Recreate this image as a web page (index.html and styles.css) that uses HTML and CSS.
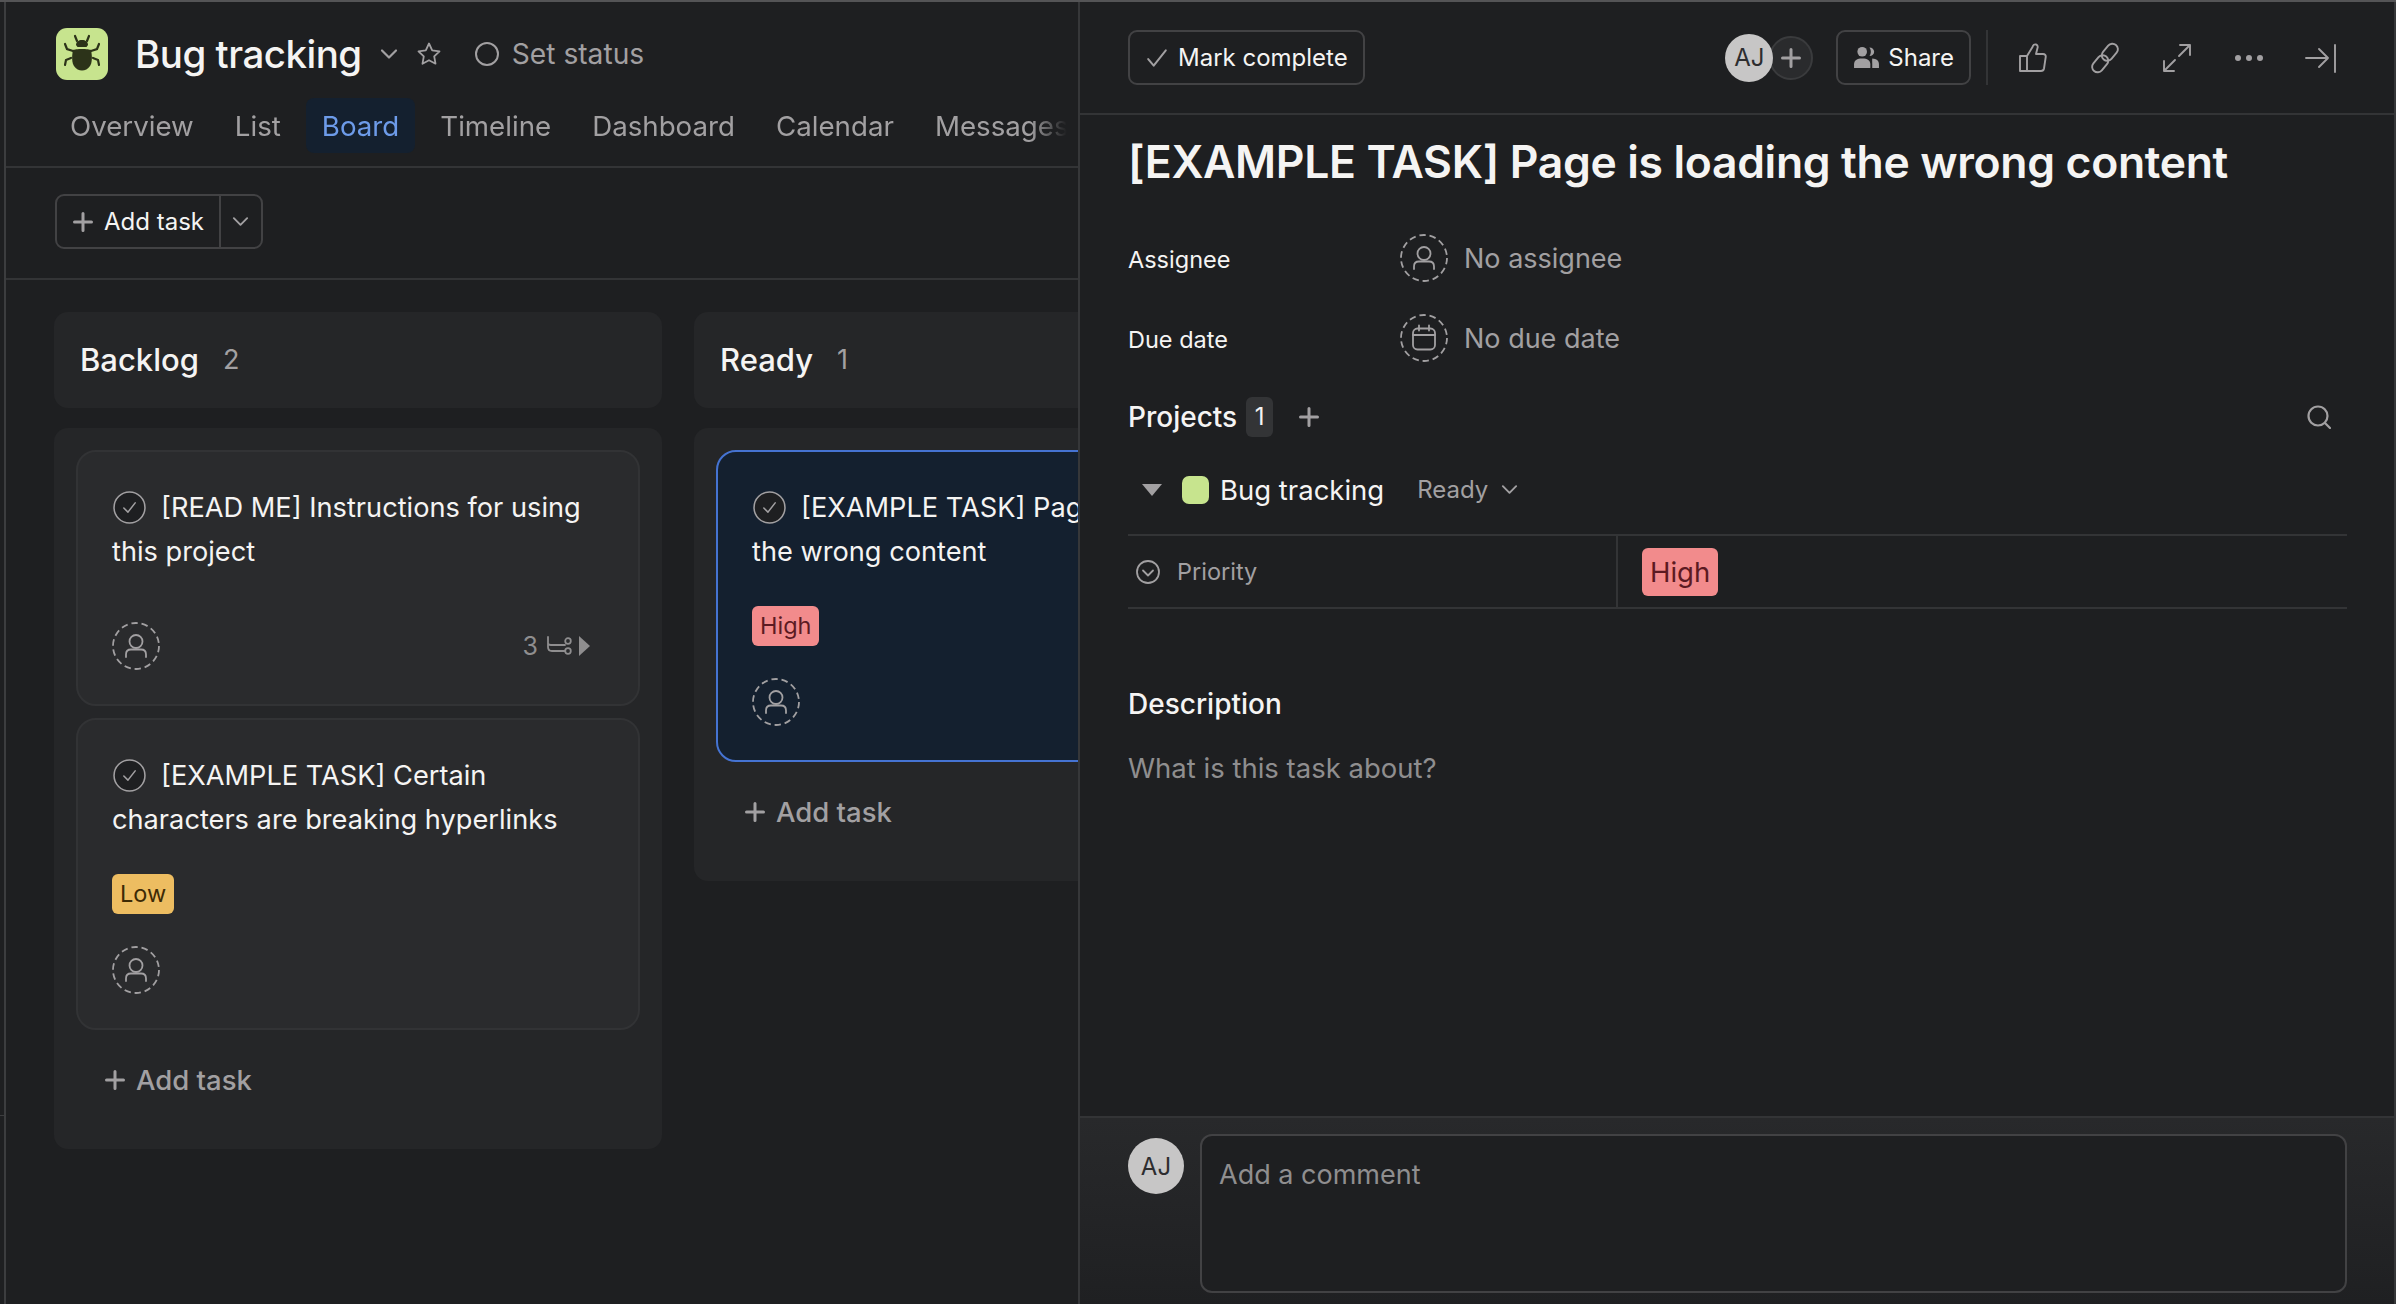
FILE: index.html
```html
<!DOCTYPE html>
<html>
<head>
    <meta name="viewport" content="width=device-width, initial-scale=1">
    <link rel="stylesheet" href="styles.css">
</head>
<body>

<svg class="icon-defs" width="0" height="0">
    <defs>
        <symbol id="person" viewBox="0 0 48 48">
            <circle class="dash-ring" cx="24" cy="24" r="23"/>
            <circle cx="24" cy="19.500" r="6.500"/>
            <path d="M14 35v-2.500c0-3 2-5 5-5h10c3 0 5 2 5 5V35"/>
        </symbol>
        <symbol id="calendar" viewBox="0 0 48 48">
            <circle class="dash-ring" cx="24" cy="24" r="23"/>
            <rect x="13" y="14.500" width="22" height="21" rx="4.500"/>
            <path d="M13 21h22M19 11.500v5M29 11.500v5"/>
        </symbol>
        <symbol id="check-circle" viewBox="0 0 32 32">
            <circle cx="16" cy="16" r="15" fill="#1e1f21"/>
            <path d="M10.500 16.500l4 4 7-9"/>
        </symbol>
        <symbol id="plus" viewBox="0 0 20 20">
            <path d="M10 1.500v17M1.500 10h17"/>
        </symbol>
        <symbol id="chevron" viewBox="0 0 20 20">
            <path d="M3 6.500l7 7 7-7"/>
        </symbol>
    </defs>
</svg>

<div class="app">
    <div class="rail"><div class="rail-item"></div></div>

    <div class="project">
        <div class="project-head">
            <div class="title-row">
                <div class="logo">
                    <svg viewBox="0 0 52 52" width="52" height="52">
                        <g fill="#2c3319">
                            <path d="M20 17c0-3 2.500-5 6-5s6 2 6 5l-1.500 2h-9z"/>
                            <path d="M17 22c2-1.500 16-1.500 18 0 1.500 7 1 13-1 16-2 3-5 4.500-8 4.500s-6-1.500-8-4.500c-2-3-2.500-9-1-16z"/>
                        </g>
                        <g fill="none" stroke="#2c3319" stroke-width="2.200" stroke-linecap="round">
                            <path d="M21 13l-2-5M31 13l2-5M17 23l-6-2-2-5M35 23l6-2 2-5M15 30l-5 2-1 5M37 30l5 2 1 5"/>
                        </g>
                    </svg>
                </div>
                <h1 class="project-name">Bug tracking</h1>
                <svg class="stroke-icon title-chevron"><use href="#chevron"/></svg>
                <svg class="stroke-icon star" viewBox="0 0 26 26"><path d="M13 2.500l3.200 6.800 7.300 1-5.300 5.100 1.300 7.300-6.500-3.500-6.500 3.500 1.300-7.300-5.300-5.100 7.300-1z"/></svg>
                <span class="status-dot"></span>
                <span class="set-status">Set status</span>
            </div>
            <div class="tabs">
                <span class="tab">Overview</span>
                <span class="tab">List</span>
                <span class="tab active">Board</span>
                <span class="tab">Timeline</span>
                <span class="tab">Dashboard</span>
                <span class="tab">Calendar</span>
                <span class="tab">Messages</span>
            </div>
        </div>

        <div class="toolbar">
            <div class="split-btn">
                <div class="split-main">
                    <svg class="stroke-icon plus-icon"><use href="#plus"/></svg>
                    <span>Add task</span>
                </div>
                <div class="split-arrow">
                    <svg class="stroke-icon arrow-icon"><use href="#chevron"/></svg>
                </div>
            </div>
        </div>

        <div class="board">
            <div class="column">
                <div class="column-head">
                    <span class="column-name">Backlog</span>
                    <span class="column-count">2</span>
                </div>
                <div class="column-body">
                    <div class="card">
                        <p class="card-title no-tag"><svg class="stroke-icon card-check"><use href="#check-circle"/></svg>[READ ME] Instructions for using this project</p>
                        <div class="card-foot">
                            <svg class="stroke-icon assignee-ring"><use href="#person"/></svg>
                            <span class="subtasks">
                                3
                                <svg class="stroke-icon subtask-icon" viewBox="0 0 26 22"><path d="M2 2v10c0 3 2 4 4 4h13M2 8c0 1.500 1 2 3 2h14"/><circle cx="22" cy="6" r="2.800"/><circle cx="22" cy="16" r="2.800"/></svg>
                                <svg class="subtask-arrow" viewBox="0 0 11 20"><path d="M0 0l11 10L0 20z"/></svg>
                            </span>
                        </div>
                    </div>
                    <div class="card">
                        <p class="card-title"><svg class="stroke-icon card-check"><use href="#check-circle"/></svg>[EXAMPLE TASK] Certain characters are breaking hyperlinks</p>
                        <span class="tag tag-low">Low</span>
                        <div class="card-foot">
                            <svg class="stroke-icon assignee-ring"><use href="#person"/></svg>
                        </div>
                    </div>
                    <div class="add-row">
                        <svg class="stroke-icon plus-icon"><use href="#plus"/></svg>
                        <span>Add task</span>
                    </div>
                </div>
            </div>

            <div class="column">
                <div class="column-head">
                    <span class="column-name">Ready</span>
                    <span class="column-count">1</span>
                </div>
                <div class="column-body">
                    <div class="card selected">
                        <p class="card-title"><svg class="stroke-icon card-check"><use href="#check-circle"/></svg>[EXAMPLE TASK] Page is loading the wrong content</p>
                        <span class="tag tag-high">High</span>
                        <div class="card-foot">
                            <svg class="stroke-icon assignee-ring"><use href="#person"/></svg>
                        </div>
                    </div>
                    <div class="add-row">
                        <svg class="stroke-icon plus-icon"><use href="#plus"/></svg>
                        <span>Add task</span>
                    </div>
                </div>
            </div>
        </div>
    </div>

    <div class="panel">
        <div class="panel-head">
            <div class="btn mark-btn">
                <svg class="stroke-icon mark-check" viewBox="0 0 20 20"><path d="M2 11l5 6L18 3"/></svg>
                <span>Mark complete</span>
            </div>
            <div class="panel-actions">
                <div class="collab">
                    <span class="avatar">AJ</span>
                    <span class="collab-add"><svg class="stroke-icon"><use href="#plus"/></svg></span>
                </div>
                <div class="btn share-btn">
                    <svg class="share-icon" viewBox="0 0 26 24"><circle cx="8.500" cy="6" r="5"/><path d="M0 23v-4c0-4 3-6 8.500-6s8.500 2 8.500 6v4z"/><path d="M16 1.500c3 0 5 2 5 4.500s-2 4.500-5 4.500c1-1.200 1.500-2.800 1.500-4.500S17 2.700 16 1.500zM19 13c4.500.2 7 2.200 7 6v4h-7v-4c0-2.500-.2-4.500 0-6z"/></svg>
                    <span>Share</span>
                </div>
                <span class="head-divider"></span>
                <div class="icon-row">
                    <svg class="stroke-icon head-icon" viewBox="0 0 32 32"><path d="M3 14h7v15H3zM10 14l5.500-9c.5-2 2-3 3.500-2.500 1.500.5 2 2 1.500 3.500L19 12h7c2 0 3 1.500 2.700 3.200L27 26.500c-.3 1.500-1.300 2.500-3 2.500H10"/></svg>
                    <svg class="stroke-icon head-icon" viewBox="0 0 32 32"><g transform="rotate(40 16 16)"><rect x="10.500" y="-1" width="11" height="19" rx="5.500"/><rect x="10.500" y="14" width="11" height="19" rx="5.500"/></g></svg>
                    <svg class="stroke-icon head-icon" viewBox="0 0 32 32"><path d="M19 3h10v10M29 3L18 14M13 29H3V19M3 29l11-11"/></svg>
                    <svg class="head-icon dots" viewBox="0 0 32 32"><circle cx="5" cy="16" r="3"/><circle cx="16" cy="16" r="3"/><circle cx="27" cy="16" r="3"/></svg>
                    <svg class="stroke-icon head-icon" viewBox="0 0 32 32"><path d="M1 16h22M14 7l9 9-9 9M30 3v27"/></svg>
                </div>
            </div>
        </div>

        <div class="panel-body">
            <h2 class="task-title">[EXAMPLE TASK] Page is loading the wrong content</h2>

            <div class="field-row">
                <span class="field-label">Assignee</span>
                <svg class="stroke-icon assignee-ring"><use href="#person"/></svg>
                <span class="field-value">No assignee</span>
            </div>
            <div class="field-row">
                <span class="field-label">Due date</span>
                <svg class="stroke-icon assignee-ring"><use href="#calendar"/></svg>
                <span class="field-value">No due date</span>
            </div>

            <div class="projects-head">
                <span class="projects-label">Projects</span>
                <span class="projects-count">1</span>
                <svg class="stroke-icon projects-plus"><use href="#plus"/></svg>
                <svg class="stroke-icon projects-search" viewBox="0 0 24 24"><circle cx="11" cy="11" r="9.500"/><path d="M18 18l5 5"/></svg>
            </div>

            <div class="project-row">
                <svg class="disclosure" viewBox="0 0 20 12"><path d="M0 0h20L10 12z"/></svg>
                <span class="project-swatch"></span>
                <span class="project-row-name">Bug tracking</span>
                <span class="project-section">Ready</span>
                <svg class="stroke-icon section-chevron"><use href="#chevron"/></svg>
            </div>

            <div class="custom-field">
                <div class="custom-label">
                    <svg class="stroke-icon priority-icon" viewBox="0 0 24 24"><circle cx="12" cy="12" r="11"/><path d="M7 10.500l5 5 5-5"/></svg>
                    <span>Priority</span>
                </div>
                <div class="custom-value">
                    <span class="tag tag-high tag-large">High</span>
                </div>
            </div>

            <h3 class="desc-title">Description</h3>
            <p class="desc-text">What is this task about?</p>
        </div>

        <div class="comment-bar">
            <span class="avatar avatar-large">AJ</span>
            <div class="comment-box">Add a comment</div>
        </div>
    </div>
</div>

</body>
</html>
```

FILE: styles.css
```css
* {
    box-sizing: border-box;
}

body {
    margin: 0;
    height: 100vh;
    overflow: hidden;
    background: #1e1f21;
    color: #f5f4f3;
    font-family: Inter, "Liberation Sans", sans-serif;
}

h1, h2, h3, p {
    margin: 0;
}

.icon-defs {
    display: block;
    position: absolute;
}

.stroke-icon {
    fill: none;
    stroke: currentColor;
    stroke-width: 1.8;
    stroke-linecap: round;
    stroke-linejoin: round;
}

.dash-ring {
    stroke-dasharray: 6.500 3.800;
    stroke-linecap: butt;
}

.app {
    display: flex;
    height: 100vh;
    border-top: 2px solid #545456;
}

/* sidebar sliver on the far left */
.rail {
    width: 6px;
    flex-shrink: 0;
    border-right: 2px solid #3c3d3f;
}

.rail-item {
    height: 1114px;
    border-bottom: 1px solid #3c3d3f;
}

/* project side */
.project {
    width: 1072px;
    flex-shrink: 0;
    overflow: hidden;
}

.project-head {
    height: 166px;
    padding-top: 26px;
    border-bottom: 2px solid #333436;
}

.title-row {
    display: flex;
    align-items: center;
    height: 52px;
    padding-left: 50px;
}

.logo {
    width: 52px;
    height: 52px;
    border-radius: 11px;
    background: #c7e48e;
}

.project-name {
    margin-left: 27px;
    font-size: 38.500px;
    font-weight: 500;
    letter-spacing: -0.5px;
}

.title-chevron {
    width: 20px;
    height: 20px;
    margin-left: 17px;
    color: #a2a0a2;
    stroke-width: 2.2;
}

.star {
    width: 26px;
    height: 26px;
    margin-left: 17px;
    color: #a2a0a2;
}

.status-dot {
    width: 24px;
    height: 24px;
    margin-left: 33px;
    border: 2px solid #a2a0a2;
    border-radius: 50%;
}

.set-status {
    margin-left: 13px;
    font-size: 28.200px;
    color: #a2a0a2;
}

.tabs {
    display: flex;
    gap: 9px;
    height: 55px;
    margin-top: 18px;
    padding-left: 48px;
    white-space: nowrap;
    -webkit-mask-image: linear-gradient(to right, #000 1024px, transparent 1061px);
    mask-image: linear-gradient(to right, #000 1024px, transparent 1061px);
}

.tab {
    display: flex;
    align-items: center;
    padding: 0 16px;
    border-radius: 8px;
    font-size: 27.700px;
    color: #a2a0a2;
}

.tab.active {
    background: #14202f;
    color: #6d9be9;
}

.toolbar {
    height: 112px;
    padding: 26px 0 0 49px;
    border-bottom: 2px solid #333436;
}

.split-btn {
    display: inline-flex;
    height: 55px;
    border: 2px solid #424244;
    border-radius: 9px;
    font-size: 24px;
}

.split-main {
    display: flex;
    align-items: center;
    gap: 11px;
    padding: 0 15px 0 16px;
    border-right: 2px solid #424244;
}

.split-arrow {
    display: flex;
    align-items: center;
    padding: 0 11px 0 10px;
}

.plus-icon {
    width: 20px;
    height: 20px;
    color: #a2a0a2;
    stroke-width: 3;
}

.arrow-icon {
    width: 19px;
    height: 19px;
    color: #a2a0a2;
    stroke-width: 2;
}

.board {
    display: flex;
    gap: 32px;
    padding: 32px 0 0 48px;
}

.column {
    width: 608px;
    flex-shrink: 0;
}

.column-head {
    display: flex;
    align-items: center;
    height: 96px;
    padding: 0 0 2px 26px;
    border-radius: 14px;
    background: #252628;
}

.column-name {
    font-size: 31px;
    font-weight: 500;
}

.column-count {
    margin-left: 24px;
    font-size: 27px;
    color: #a2a0a2;
}

.column-body {
    display: flex;
    flex-direction: column;
    gap: 12px;
    margin-top: 20px;
    padding: 22px 22px 31px;
    border-radius: 14px;
    background: #252628;
}

.card {
    display: flex;
    flex-direction: column;
    align-items: flex-start;
    padding: 34px;
    border: 2px solid #323335;
    border-radius: 20px;
    background: #2a2b2d;
}

.card.selected {
    border-color: #4573d2;
    background: #14202f;
}

.card-title {
    font-size: 27.200px;
    line-height: 44px;
    margin-bottom: 32px;
}

.card-title.no-tag {
    margin-bottom: 48px;
}

.card-check {
    width: 33px;
    height: 33px;
    margin: 0 15px 0 1px;
    vertical-align: -7px;
    color: #a2a0a2;
    stroke-width: 1.5;
}

.tag {
    height: 40px;
    margin-bottom: 32px;
    padding: 0 8px;
    border-radius: 6px;
    font-size: 23.500px;
    line-height: 40px;
}

.tag-low {
    background: #edbd61;
    color: #3d2a05;
}

.tag-high {
    background: #f28b8c;
    color: #5c1a22;
}

.card-foot {
    display: flex;
    align-items: center;
    justify-content: space-between;
    width: 100%;
}

.assignee-ring {
    width: 48px;
    height: 48px;
    flex-shrink: 0;
    color: #a2a0a2;
}

.subtasks {
    display: flex;
    align-items: center;
    margin-right: 14px;
    font-size: 25px;
    color: #8f8e8f;
}

.subtask-icon {
    width: 26px;
    height: 22px;
    margin-left: 8px;
}

.subtask-arrow {
    width: 11px;
    height: 20px;
    margin-left: 7px;
    fill: #8f8e8f;
}

.add-row {
    display: flex;
    align-items: center;
    gap: 11px;
    height: 76px;
    padding-left: 29px;
    font-size: 27.500px;
    font-weight: 500;
    color: #a2a0a2;
}

/* task detail panel */
.panel {
    display: flex;
    flex-direction: column;
    flex: 1;
    min-width: 0;
    border-left: 2px solid #363739;
    border-right: 2px solid #363739;
    background: #1e1f21;
}

.panel-head {
    display: flex;
    align-items: center;
    height: 113px;
    flex-shrink: 0;
    padding: 0 57px 0 48px;
    border-bottom: 2px solid #333436;
}

.btn {
    display: flex;
    align-items: center;
    height: 55px;
    border: 2px solid #424244;
    border-radius: 9px;
    font-size: 24px;
}

.mark-btn {
    gap: 10px;
    padding: 0 15px 0 16px;
}

.mark-check {
    width: 22px;
    height: 22px;
    color: #a2a0a2;
    stroke-width: 1.8;
}

.panel-actions {
    display: flex;
    align-items: center;
    margin-left: auto;
}

.collab {
    display: flex;
    align-items: center;
}

.avatar {
    display: flex;
    align-items: center;
    justify-content: center;
    position: relative;
    width: 48px;
    height: 48px;
    flex-shrink: 0;
    border-radius: 50%;
    background: #c7c6c6;
    color: #2d2d2f;
    font-size: 24px;
}

.collab-add {
    display: flex;
    align-items: center;
    justify-content: center;
    width: 44px;
    height: 44px;
    margin-left: -4px;
    padding: 12px;
    border: 2px solid #3a3b3d;
    border-radius: 50%;
    background: #2a2b2d;
    color: #a2a0a2;
}

.collab-add svg {
    width: 20px;
    height: 20px;
    flex-shrink: 0;
    stroke-width: 3;
}

.share-btn {
    gap: 9px;
    margin-left: 23px;
    padding: 0 15px 0 16px;
}

.share-icon {
    width: 25px;
    height: 23px;
    fill: #a2a0a2;
}

.head-divider {
    width: 2px;
    height: 55px;
    margin: 0 29px 0 15px;
    background: #333436;
}

.icon-row {
    display: flex;
    gap: 40px;
}

.head-icon {
    width: 32px;
    height: 32px;
    color: #a2a0a2;
    stroke-width: 1.9;
}

.dots {
    fill: #a2a0a2;
}

.panel-body {
    flex: 1;
    padding: 0 47px 0 48px;
}

.task-title {
    margin-top: 18px;
    font-size: 44.500px;
    line-height: 58px;
    font-weight: 600;
    letter-spacing: -0.35px;
    white-space: nowrap;
}

.field-row {
    display: flex;
    align-items: center;
    height: 80px;
}

.field-row:first-of-type {
    margin-top: 27px;
}

.field-label {
    width: 272px;
    padding-top: 3px;
    font-size: 23.500px;
}

.field-value {
    margin-left: 16px;
    font-size: 27px;
    color: #a2a0a2;
}

.projects-head {
    display: flex;
    align-items: center;
    height: 40px;
    margin-top: 19px;
}

.projects-label {
    font-size: 28px;
    font-weight: 500;
}

.projects-count {
    width: 27px;
    height: 40px;
    margin-left: 9px;
    border-radius: 6px;
    background: #333436;
    font-size: 24px;
    line-height: 40px;
    text-align: center;
}

.projects-plus {
    width: 20px;
    height: 20px;
    margin-left: 26px;
    color: #a2a0a2;
    stroke-width: 3;
}

.projects-search {
    width: 24px;
    height: 24px;
    margin-left: auto;
    margin-right: 16px;
    color: #a2a0a2;
    stroke-width: 2.2;
}

.project-row {
    display: flex;
    align-items: center;
    height: 89px;
    margin-top: 8px;
    padding-left: 14px;
}

.disclosure {
    width: 20px;
    height: 12px;
    fill: #a2a0a2;
}

.project-swatch {
    width: 27px;
    height: 28px;
    margin-left: 20px;
    border-radius: 7px;
    background: #c7e48e;
}

.project-row-name {
    margin-left: 11px;
    font-size: 27.500px;
}

.project-section {
    margin-left: 33px;
    font-size: 24px;
    color: #a2a0a2;
}

.section-chevron {
    width: 19px;
    height: 19px;
    margin-left: 12px;
    color: #a2a0a2;
    stroke-width: 2;
}

.custom-field {
    display: flex;
    height: 75px;
    border-top: 2px solid #333436;
    border-bottom: 2px solid #333436;
}

.custom-label {
    display: flex;
    align-items: center;
    gap: 17px;
    width: 490px;
    padding-left: 8px;
    border-right: 2px solid #333436;
    font-size: 23.500px;
    color: #a2a0a2;
}

.priority-icon {
    width: 24px;
    height: 24px;
}

.custom-value {
    display: flex;
    align-items: center;
    padding-left: 24px;
}

.tag-large {
    height: 48px;
    margin-bottom: 0;
    font-size: 27.500px;
    line-height: 48px;
}

.desc-title {
    margin-top: 77px;
    font-size: 28px;
    line-height: 36px;
    font-weight: 500;
}

.desc-text {
    margin-top: 28px;
    font-size: 27.500px;
    line-height: 36px;
    color: #8f8e8f;
}

.comment-bar {
    display: flex;
    gap: 16px;
    height: 188px;
    flex-shrink: 0;
    padding: 16px 47px 0 48px;
    border-top: 2px solid #333436;
    background: linear-gradient(#28292b, #1f2022);
}

.avatar-large {
    width: 56px;
    height: 56px;
    margin-top: 4px;
}

.comment-box {
    flex: 1;
    height: 159px;
    padding: 22px 17px;
    border: 2px solid #424244;
    border-radius: 12px;
    background: #1e1f21;
    font-size: 27px;
    color: #8f8e8f;
}
```
